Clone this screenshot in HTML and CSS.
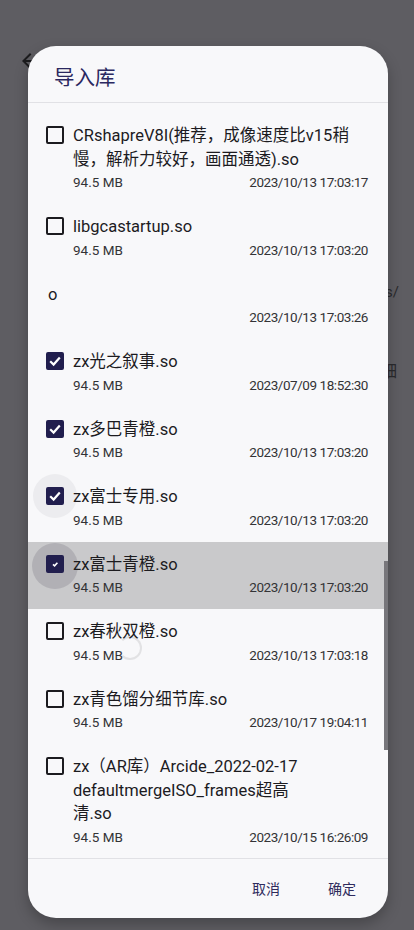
FILE: index.html
```html
<!DOCTYPE html>
<html lang="zh">
<head>
<meta charset="utf-8">
<title>导入库</title>
<link rel="stylesheet" href="styles.css">
</head>
<body>
<div class="backdrop">
  <svg class="bg-back" width="24" height="24" viewBox="0 0 24 24"><path d="M20 11H7.83l5.59-5.59L12 4l-8 8 8 8 1.41-1.41L7.83 13H20v-2z"/></svg>
  <span class="bg-frag frag-a">ts/</span>
  <span class="bg-frag frag-b">细</span>
</div>

<div class="dialog">
  <div class="dlg-head">导入库</div>
  <div class="dlg-list">
    <div class="item">
      <span class="cb"></span>
      <div class="body">
        <div class="title">CRshapreV8I(推荐，成像速度比v15稍<br>慢，解析力较好，画面通透).so</div>
        <div class="meta"><span>94.5 MB</span><span class="date">2023/10/13 17:03:17</span></div>
      </div>
    </div>
    <div class="item">
      <span class="cb"></span>
      <div class="body">
        <div class="title">libgcastartup.so</div>
        <div class="meta"><span>94.5 MB</span><span class="date">2023/10/13 17:03:20</span></div>
      </div>
    </div>
    <div class="item nocheck">
      <div class="body">
        <div class="title">o</div>
        <div class="meta"><span></span><span class="date">2023/10/13 17:03:26</span></div>
      </div>
    </div>
    <div class="item">
      <span class="cb on"><svg viewBox="0 0 18 18"><polyline points="4.2,9.3 7.6,12.6 13.8,5.6"/></svg></span>
      <div class="body">
        <div class="title">zx光之叙事.so</div>
        <div class="meta"><span>94.5 MB</span><span class="date">2023/07/09 18:52:30</span></div>
      </div>
    </div>
    <div class="item">
      <span class="cb on"><svg viewBox="0 0 18 18"><polyline points="4.2,9.3 7.6,12.6 13.8,5.6"/></svg></span>
      <div class="body">
        <div class="title">zx多巴青橙.so</div>
        <div class="meta"><span>94.5 MB</span><span class="date">2023/10/13 17:03:20</span></div>
      </div>
    </div>
    <div class="item">
      <span class="ripple light"></span>
      <span class="cb on"><svg viewBox="0 0 18 18"><polyline points="4.2,9.3 7.6,12.6 13.8,5.6"/></svg></span>
      <div class="body">
        <div class="title">zx富士专用.so</div>
        <div class="meta"><span>94.5 MB</span><span class="date">2023/10/13 17:03:20</span></div>
      </div>
    </div>
    <div class="item pressed">
      <span class="ripple dark"></span>
      <span class="cb on small"><svg viewBox="0 0 18 18"><polyline points="7,9.4 8.6,10.9 11.4,7.8"/></svg></span>
      <div class="body">
        <div class="title">zx富士青橙.so</div>
        <div class="meta"><span>94.5 MB</span><span class="date">2023/10/13 17:03:20</span></div>
      </div>
    </div>
    <div class="item">
      <span class="ring"></span>
      <span class="cb"></span>
      <div class="body">
        <div class="title">zx春秋双橙.so</div>
        <div class="meta"><span>94.5 MB</span><span class="date">2023/10/13 17:03:18</span></div>
      </div>
    </div>
    <div class="item">
      <span class="cb"></span>
      <div class="body">
        <div class="title">zx青色馏分细节库.so</div>
        <div class="meta"><span>94.5 MB</span><span class="date">2023/10/17 19:04:11</span></div>
      </div>
    </div>
    <div class="item">
      <span class="cb"></span>
      <div class="body">
        <div class="title">zx（AR库）Arcide_2022-02-17<br>defaultmergeISO_frames超高<br>清.so</div>
        <div class="meta"><span>94.5 MB</span><span class="date">2023/10/15 16:26:09</span></div>
      </div>
    </div>
  </div>
  <div class="dlg-foot">
    <button class="btn">取消</button>
    <button class="btn">确定</button>
  </div>
  <span class="scroll-thumb"></span>
</div>
</body>
</html>
```

FILE: styles.css
```css
* { box-sizing: border-box; }

html, body {
  margin: 0;
  height: 100%;
}

body {
  background: #5e5d62;
  font-family: Roboto, "Noto Sans CJK SC", sans-serif;
  padding: 46px 26px 12px 28px;
  position: relative;
  overflow: hidden;
}

.backdrop {
  position: absolute;
  inset: 0;
  z-index: 0;
}

.bg-back {
  position: absolute;
  left: 18px;
  top: 49px;
  fill: #1c1c1e;
}

.bg-frag {
  position: absolute;
  color: #2a2a2d;
  font-size: 15px;
  line-height: 18px;
}

.frag-a { left: 380px; top: 283px; }
.frag-b { left: 381px; top: 363px; font-size: 16px; }

.dialog {
  position: relative;
  z-index: 1;
  height: 872px;
  background: #f8f8fa;
  border-radius: 28px;
  display: flex;
  flex-direction: column;
  overflow: hidden;
  box-shadow: 0 6px 14px rgba(0, 0, 0, 0.25);
}

.dlg-head {
  padding: 20px 26px 12px;
  font-size: 20.5px;
  line-height: 24px;
  color: #2b2860;
  border-bottom: 1px solid #e1e1e5;
  flex: none;
}

.dlg-list {
  flex: 1;
  overflow: hidden;
  padding-top: 10px;
}

.item {
  position: relative;
  display: flex;
  align-items: flex-start;
  gap: 9px;
  padding: 11px 20px 11px 18px;
}

.item.nocheck { padding-left: 20px; }

.item.pressed { background: #c9c9cb; }

.body {
  position: relative;
  z-index: 1;
  flex: 1;
  min-width: 0;
}

.title {
  font-size: 16.5px;
  line-height: 23.5px;
  color: #1c1b1f;
}

.meta {
  display: flex;
  justify-content: space-between;
  font-size: 13.5px;
  line-height: 22px;
  color: #333336;
}

.date { letter-spacing: -0.45px; }

.cb {
  position: relative;
  flex: none;
  width: 18px;
  height: 18px;
  margin-top: 2px;
  border: 2px solid #1c1b1f;
  border-radius: 2px;
  z-index: 1;
}

.cb.on {
  background: #211e4e;
  border-color: #211e4e;
}

.cb svg {
  position: absolute;
  left: -2px;
  top: -2px;
  width: 18px;
  height: 18px;
  fill: none;
  stroke: #ffffff;
  stroke-width: 2.2;
}

.cb.small svg { stroke-width: 1.6; }

.ripple {
  position: absolute;
  border-radius: 50%;
  z-index: 0;
}

.ripple.light {
  left: 5px;
  top: 0;
  width: 44px;
  height: 44px;
  background: #ececef;
}

.ripple.dark {
  left: 4px;
  top: 1px;
  width: 46px;
  height: 46px;
  background: #b1b0b5;
}

.ring {
  position: absolute;
  left: 90px;
  top: 27px;
  width: 24px;
  height: 24px;
  border-radius: 50%;
  border: 2px solid #e2e2e4;
  border-left-color: transparent;
}

.dlg-foot {
  flex: none;
  height: 60px;
  border-top: 1px solid #e1e1e5;
  display: flex;
  justify-content: flex-end;
  align-items: center;
  gap: 24px;
  padding: 0 20px 0 0;
}

.btn {
  background: none;
  border: 0;
  padding: 10px 12px;
  font-family: Roboto, "Noto Sans CJK SC", sans-serif;
  font-size: 14px;
  line-height: 18px;
  color: #2e2b5c;
}

.scroll-thumb {
  position: absolute;
  right: 0;
  top: 515px;
  width: 4px;
  height: 189px;
  background: #77767b;
}
```
